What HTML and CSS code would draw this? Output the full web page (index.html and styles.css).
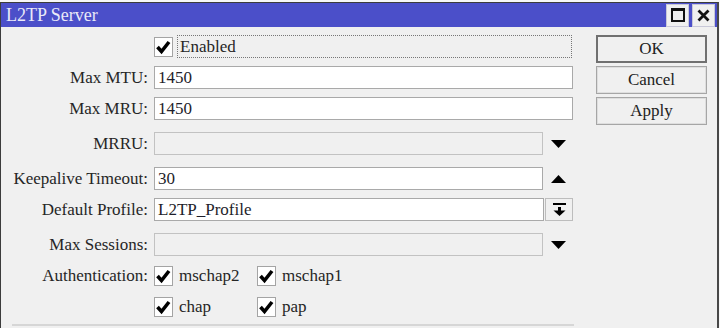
FILE: index.html
```html
<!DOCTYPE html>
<html lang="en">
  <head>
    <meta charset="UTF-8" />
    <title>L2TP Server</title>
    <link rel="stylesheet" href="styles.css">
  </head>
  <body>
    <div class="window">
      <header class="titlebar">
        <span class="title">L2TP Server</span>
        <div class="tb-buttons">
          <span class="tb-btn">
            <svg width="14" height="14" viewBox="0 0 14 14"><rect x="1" y="1" width="12" height="12" fill="none" stroke="#111" stroke-width="2"/><rect x="1" y="1" width="12" height="2" fill="#111"/></svg>
          </span>
          <span class="tb-btn">
            <svg width="13" height="13" viewBox="0 0 13 13"><path d="M1.5 1.5 L11.5 11.5 M11.5 1.5 L1.5 11.5" stroke="#111" stroke-width="2.8"/></svg>
          </span>
        </div>
      </header>

      <section class="content">
        <div class="form">
          <div class="row">
            <span class="label"></span>
            <span class="check"><svg width="17" height="18" viewBox="0 0 17 18"><polyline points="2.5,9 6.5,13.5 14,4" fill="none" stroke="#000" stroke-width="3.6"/></svg></span>
            <span class="focus-text">Enabled</span>
          </div>
          <div class="row">
            <span class="label">Max MTU:</span>
            <div class="field">1450</div>
          </div>
          <div class="row">
            <span class="label">Max MRU:</span>
            <div class="field">1450</div>
          </div>
          <div class="row wide-gap">
            <span class="label">MRRU:</span>
            <div class="field short disabled"></div>
            <span class="arrow"><svg width="15" height="8" viewBox="0 0 15 8"><polygon points="0,0 15,0 7.5,8" fill="#000"/></svg></span>
          </div>
          <div class="row wide-gap">
            <span class="label">Keepalive Timeout:</span>
            <div class="field short">30</div>
            <span class="arrow"><svg width="15" height="8" viewBox="0 0 15 8"><polygon points="0,8 15,8 7.5,0" fill="#000"/></svg></span>
          </div>
          <div class="row">
            <span class="label">Default Profile:</span>
            <div class="field profile">L2TP_Profile</div>
            <span class="drop-btn"><svg width="13" height="14" viewBox="0 0 13 14"><rect x="0" y="0" width="13" height="2" fill="#000"/><rect x="5" y="4" width="3" height="4" fill="#000"/><polygon points="0.5,7.5 12.5,7.5 6.5,13" fill="#000"/></svg></span>
          </div>
          <div class="row wide-gap">
            <span class="label">Max Sessions:</span>
            <div class="field short disabled"></div>
            <span class="arrow"><svg width="15" height="8" viewBox="0 0 15 8"><polygon points="0,0 15,0 7.5,8" fill="#000"/></svg></span>
          </div>
          <div class="row">
            <span class="label">Authentication:</span>
            <span class="opt">
              <span class="check"><svg width="17" height="18" viewBox="0 0 17 18"><polyline points="2.5,9 6.5,13.5 14,4" fill="none" stroke="#000" stroke-width="3.6"/></svg></span>
              mschap2
            </span>
            <span class="opt">
              <span class="check"><svg width="17" height="18" viewBox="0 0 17 18"><polyline points="2.5,9 6.5,13.5 14,4" fill="none" stroke="#000" stroke-width="3.6"/></svg></span>
              mschap1
            </span>
          </div>
          <div class="row">
            <span class="label"></span>
            <span class="opt">
              <span class="check"><svg width="17" height="18" viewBox="0 0 17 18"><polyline points="2.5,9 6.5,13.5 14,4" fill="none" stroke="#000" stroke-width="3.6"/></svg></span>
              chap
            </span>
            <span class="opt">
              <span class="check"><svg width="17" height="18" viewBox="0 0 17 18"><polyline points="2.5,9 6.5,13.5 14,4" fill="none" stroke="#000" stroke-width="3.6"/></svg></span>
              pap
            </span>
          </div>
          <hr class="sep" />
        </div>

        <div class="actions">
          <button class="btn default">OK</button>
          <button class="btn">Cancel</button>
          <button class="btn">Apply</button>
        </div>
      </section>
    </div>
  </body>
</html>
```

FILE: styles.css
```css
* {
  box-sizing: border-box;
}
body {
  margin: 0;
  background-color: #f7f7f7;
  font-family: "Liberation Serif", "Times New Roman", serif;
  font-size: 17px;
  color: #262626;
  overflow: hidden;
}
.window {
  margin-top: 2px;
  width: 719px;
  height: 326px;
  background-color: #f0f0f0;
  border-top: 1px solid #3c3c3c;
  border-left: 1px solid #3c3c3c;
  border-right: 2px solid #484848;
}
.titlebar {
  display: flex;
  align-items: center;
  height: 24px;
  padding-left: 5px;
  padding-right: 2px;
  background-color: #4b4fc9;
  color: #e9e9f8;
  font-size: 18px;
}
.tb-buttons {
  display: flex;
  gap: 3px;
  margin-left: auto;
}
.tb-btn {
  display: flex;
  align-items: center;
  justify-content: center;
  width: 23px;
  height: 23px;
  background-color: #f0f0f0;
  border: 1px solid #c8c8d8;
}
.content {
  display: flex;
  padding-top: 8px;
}
.form {
  width: 572px;
  flex: none;
}
.row {
  display: flex;
  align-items: center;
  height: 23px;
  margin-top: 8px;
}
.row:first-child {
  margin-top: 0;
}
.row.wide-gap {
  margin-top: 12px;
}
.label {
  flex: none;
  width: 147px;
  margin-right: 6px;
  text-align: right;
  white-space: nowrap;
}
.field {
  width: 420px;
  height: 23px;
  padding: 0 3px;
  line-height: 21px;
  background-color: #fff;
  border: 1px solid #a9a9a9;
  color: #1e1e2a;
}
.field.short {
  width: 390px;
}
.field.profile {
  width: 392px;
}
.field.disabled {
  background-color: #f0f0f0;
  border-color: #c2c2c2;
}
.arrow {
  display: flex;
  justify-content: center;
  width: 30px;
}
.drop-btn {
  display: flex;
  align-items: center;
  justify-content: center;
  width: 28px;
  height: 23px;
  margin-left: 1px;
  border: 1px solid #bdbdbd;
  background-color: #f0f0f0;
}
.check {
  display: flex;
  align-items: center;
  justify-content: center;
  flex: none;
  width: 19px;
  height: 20px;
  background-color: #fff;
  border: 1px solid #a4a4a4;
}
.focus-text {
  width: 395px;
  height: 23px;
  margin-left: 4px;
  padding-left: 2px;
  line-height: 21px;
  border: 1px dotted #777;
}
.opt {
  display: flex;
  align-items: center;
  gap: 6px;
  width: 103px;
}
.sep {
  width: 562px;
  margin: 6px 0 0 11px;
  border: none;
  border-top: 2px solid #d6d6d6;
}
.actions {
  display: flex;
  flex-direction: column;
  gap: 3px;
  width: 111px;
  margin-left: 23px;
}
.btn {
  height: 28px;
  padding: 0;
  font-family: inherit;
  font-size: 17px;
  color: #222;
  background-color: #f0f0f0;
  border: 1px solid #a6a6a6;
  box-shadow: inset 0 0 0 1px #dedede;
}
.btn.default {
  border: 2px solid #707070;
  box-shadow: none;
}
```
